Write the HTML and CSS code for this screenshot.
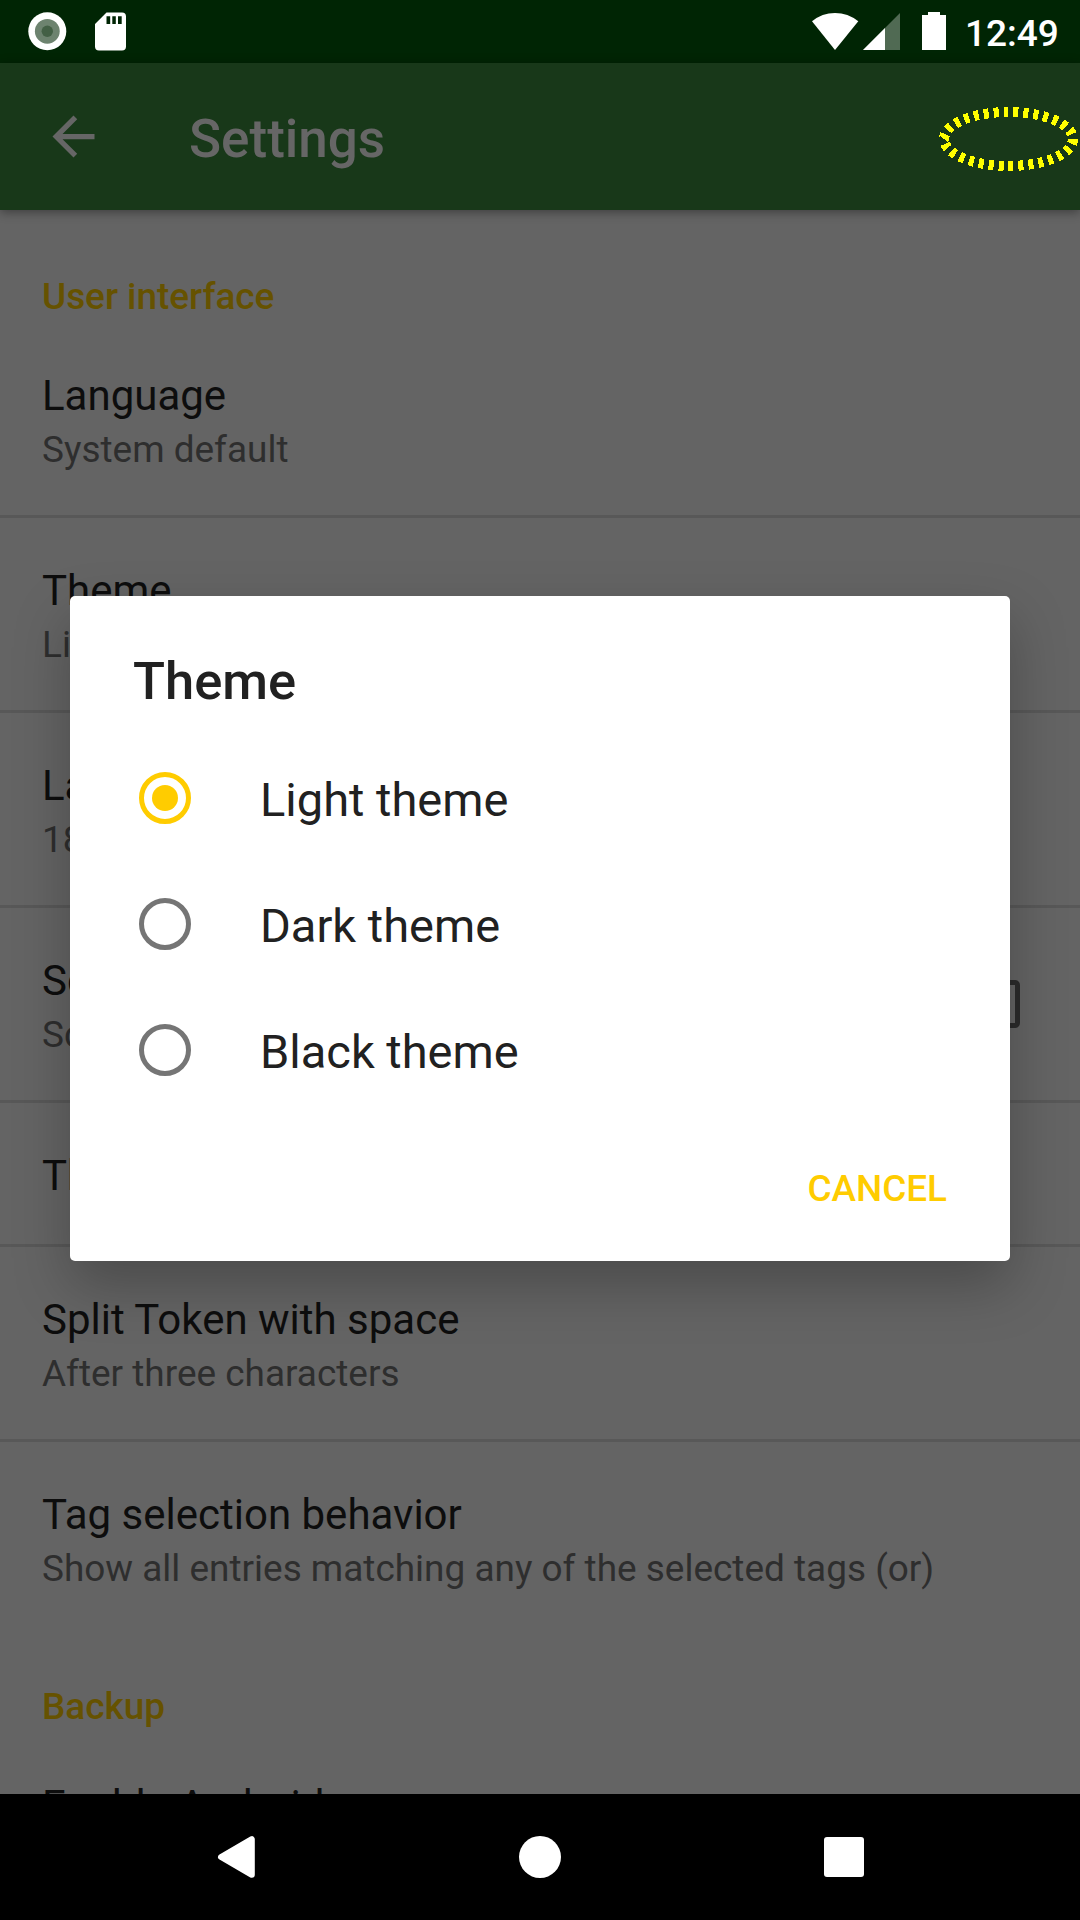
FILE: index.html
```html
<!DOCTYPE html>
<html lang="en">
<head>
<meta charset="utf-8">
<title>Settings</title>
<link rel="stylesheet" href="styles.css">
</head>
<body>
<div class="screen">
  <header class="status-bar">
    <svg class="status-left" width="140" height="63" viewBox="0 0 140 63">
      <circle cx="47.3" cy="31.3" r="19" fill="#fff"/>
      <circle cx="47.3" cy="31.3" r="12.4" fill="#6d836f"/>
      <circle cx="47.3" cy="31.3" r="5.7" fill="#436045"/>
      <path fill="#fff" fill-rule="evenodd" d="M106.500 12.500H122a4 4 0 0 1 4 4V46.500a4 4 0 0 1-4 4H99a4 4 0 0 1-4-4V24ZM106.500 16.300V24h3.700V16.300ZM112.300 16.300V24h3.500V16.300ZM118 16.300V24h3.700V16.300Z"/>
    </svg>
    <div class="status-right">
      <svg width="136" height="63" viewBox="811 0 136 63">
        <path fill="#fff" d="M812 21.300Q822 13 835 13T858.300 21.300L835 50Z"/>
        <path fill="#506a53" d="M900 13V50H863Z"/>
        <path fill="#fff" d="M885 28V50H863Z"/>
        <path fill="#fff" d="M928 12h12v3h6v35h-24V15h6Z"/>
      </svg>
      <span class="clock">12:49</span>
    </div>
  </header>

  <nav class="toolbar">
    <svg class="back" width="63" height="63" viewBox="0 0 24 24"><path fill="currentColor" d="M20 11H7.830l5.590-5.590L12 4l-8 8 8 8 1.410-1.410L7.830 13H20v-2z"/></svg>
    <h1 class="toolbar-title">Settings</h1>
    <svg class="highlight" width="142" height="66" viewBox="0 0 142 66"><ellipse cx="70.500" cy="33" rx="64.500" ry="27" pathLength="300"/></svg>
  </nav>

  <main class="list">
    <h2 class="section">User interface</h2>
    <div class="row"><div class="label">Language</div><div class="summary">System default</div></div>
    <div class="row"><div class="label">Theme</div><div class="summary">Li</div></div>
    <div class="row"><div class="label">La</div><div class="summary">18</div></div>
    <div class="row with-check">
      <div><div class="label">Sc</div><div class="summary">Sc</div></div>
      <span class="checkbox"></span>
    </div>
    <div class="row"><div class="label">Th</div></div>
    <div class="row"><div class="label">Split Token with space</div><div class="summary">After three characters</div></div>
    <div class="row last"><div class="label">Tag selection behavior</div><div class="summary">Show all entries matching any of the selected tags (or)</div></div>
    <h2 class="section">Backup</h2>
    <div class="row"><div class="label">Enable Android</div></div>
  </main>

  <footer class="nav-bar">
    <svg width="42" height="42" viewBox="0 0 42 42"><path fill="#fff" stroke="#fff" stroke-width="6" stroke-linejoin="round" d="M6 21L36.800 3.200V38.800Z"/></svg>
    <svg width="42" height="42" viewBox="0 0 42 42"><circle cx="21" cy="21" r="21" fill="#fff"/></svg>
    <svg width="42" height="42" viewBox="0 0 42 42"><rect x="1" y="1" width="40" height="40" rx="3" fill="#fff"/></svg>
  </footer>

  <section class="dialog">
    <h2 class="dialog-title">Theme</h2>
    <div class="option"><span class="radio checked"></span><span class="option-text">Light theme</span></div>
    <div class="option"><span class="radio"></span><span class="option-text">Dark theme</span></div>
    <div class="option"><span class="radio"></span><span class="option-text">Black theme</span></div>
    <div class="actions"><span class="button">CANCEL</span></div>
  </section>
</div>
</body>
</html>
```
FILE: styles.css
```css
* { box-sizing: border-box; }

body {
  margin: 0;
  font-family: Roboto, "Liberation Sans", sans-serif;
  background: #000;
}

h1, h2 { margin: 0; font-weight: 500; }
svg { display: block; flex: none; }

.screen {
  position: relative;
  display: flex;
  flex-direction: column;
  width: 1080px;
  height: 1920px;
  overflow: hidden;
}

.status-bar {
  display: flex;
  justify-content: space-between;
  flex: none;
  height: 63px;
  padding-right: 22px;
  background: #002504;
}

.status-right { display: flex; gap: 18px; }

.clock {
  width: 93px;
  color: #fff;
  font-size: 37px;
  font-weight: 500;
  line-height: 67px;
  white-space: nowrap;
}

.toolbar {
  z-index: 1;
  display: flex;
  align-items: center;
  flex: none;
  height: 147px;
  padding-left: 42px;
  background: #183819;
  color: #666;
  box-shadow: 0 2px 10px rgba(0, 0, 0, .4);
}

.toolbar-title {
  margin-left: 84px;
  padding-top: 4px;
  font-size: 53px;
  line-height: 62px;
}

.highlight { margin-left: auto; margin-top: 5px; }

.highlight ellipse {
  fill: none;
  stroke: #ff0;
  stroke-width: 10;
  stroke-dasharray: 5 5;
  shape-rendering: crispEdges;
}

.list {
  flex: 1;
  min-height: 0;
  padding-top: 14px;
  overflow: hidden;
  background: #646464;
}

.section {
  height: 99px;
  padding: 46px 42px 0;
  color: #665200;
  font-size: 36.9px;
  line-height: 53px;
}

.row {
  padding: 44px 42px 40px;
  border-bottom: 3px solid #585858;
}

.row.last { border-bottom: 0; }

.with-check {
  display: flex;
  justify-content: space-between;
  padding-right: 60px;
}

.checkbox {
  width: 48px;
  height: 48px;
  margin-top: 28px;
  border: 5px solid #2b2b2b;
  border-radius: 5px;
}

.label { color: #0d0d0d; font-size: 42px; line-height: 57px; }
.summary { color: #2e2e2e; font-size: 36.95px; line-height: 51px; }

.nav-bar {
  display: flex;
  justify-content: center;
  align-items: center;
  gap: 262px;
  flex: none;
  height: 126px;
  background: #000;
}

.dialog {
  position: absolute;
  z-index: 2;
  top: 596px;
  left: 70px;
  width: 940px;
  height: 665px;
  padding: 52px 63px 0;
  border-radius: 5px;
  background: #fff;
  color: #212121;
  box-shadow: 0 24px 56px rgba(0, 0, 0, .26);
}

.dialog-title { font-size: 52.5px; line-height: 66px; margin-bottom: 21px; }

.option {
  display: flex;
  align-items: center;
  gap: 69px;
  height: 126px;
  padding-left: 6px;
  font-size: 47px;
}

.option-text { padding-top: 2px; }

.radio {
  display: grid;
  place-items: center;
  width: 52px;
  height: 52px;
  margin-top: -1px;
  border: 5px solid #757575;
  border-radius: 50%;
}

.radio.checked { border-color: #fc0; }

.radio.checked::after {
  content: "";
  width: 26px;
  height: 26px;
  border-radius: 50%;
  background: #fc0;
}

.actions {
  display: flex;
  justify-content: flex-end;
  margin-top: 51px;
}

.button {
  color: #fc0;
  font-size: 36.9px;
  font-weight: 500;
  line-height: 50px;
}
```
